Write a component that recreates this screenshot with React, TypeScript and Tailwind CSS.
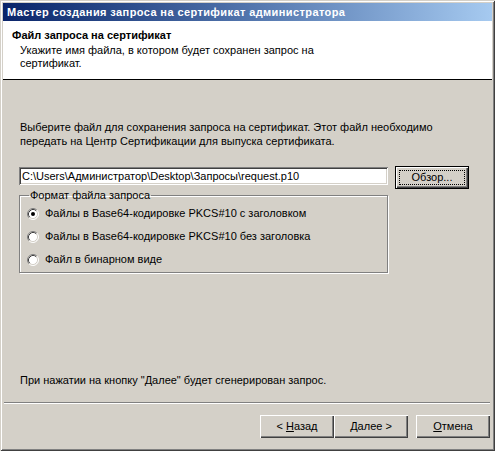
import React from "react";

const font = { fontFamily: '"Liberation Sans", Arial, sans-serif' };

function Radio({ checked }: { checked?: boolean }) {
  return (
    <svg width="12" height="12" viewBox="0 0 12 12" className="shrink-0">
      <circle cx="6" cy="6" r="5" fill="#ffffff" />
      <path d="M2.11 9.89 A5.5 5.5 0 0 1 9.89 2.11" fill="none" stroke="#808080" strokeWidth="1" />
      <path d="M2.82 9.18 A4.5 4.5 0 0 1 9.18 2.82" fill="none" stroke="#404040" strokeWidth="1" />
      <path d="M9.89 2.11 A5.5 5.5 0 0 1 2.11 9.89" fill="none" stroke="#ffffff" strokeWidth="1" />
      <path d="M9.18 2.82 A4.5 4.5 0 0 1 2.82 9.18" fill="none" stroke="#d4d0c8" strokeWidth="1" />
      {checked && <circle cx="6" cy="6" r="2" fill="#000000" />}
    </svg>
  );
}

function Button({ children, isDefault }: { children: React.ReactNode; isDefault?: boolean }) {
  if (isDefault) {
    return (
      <div className="w-[74px] h-[23px] border border-black bg-[#d4d0c8] shadow-[inset_1px_1px_#ffffff,inset_-1px_-1px_#404040,inset_-2px_-2px_#808080] p-[3px]">
        <div className="h-full border border-dotted border-black flex items-center justify-center text-[11px] text-black">
          <span>{children}</span>
        </div>
      </div>
    );
  }
  return (
    <div className="w-[74px] h-[23px] bg-[#d4d0c8] shadow-[inset_1px_1px_#ffffff,inset_-1px_-1px_#404040,inset_-2px_-2px_#808080] flex items-center justify-center text-[11px] text-black">
      <span className="whitespace-pre">{children}</span>
    </div>
  );
}

export default function App() {
  return (
    <div
      className="w-[495px] h-[451px] bg-[#d4d0c8] p-[3px] flex flex-col shadow-[inset_1px_1px_#d4d0c8,inset_-1px_-1px_#404040,inset_2px_2px_#ffffff,inset_-2px_-2px_#808080]"
      style={font}
    >
      {/* title bar */}
      <div className="h-[18px] bg-gradient-to-r from-[#0a246a] to-[#a6caf0] flex items-center pl-[4px]">
        <span className="text-white font-bold text-[11px] leading-none tracking-[0.4px]">
          Мастер создания запроса на сертификат администратора
        </span>
      </div>

      {/* header */}
      <div className="h-[59px] bg-white border-b border-black">
        <div className="pl-[9px] pt-[7px] text-[11px] font-bold text-black leading-[14px]">
          Файл запроса на сертификат
        </div>
        <div className="pl-[17px] pt-[2px] text-[11px] text-black leading-[13px]">
          Укажите имя файла, в котором будет сохранен запрос на
          <br />
          сертификат.
        </div>
      </div>

      {/* body */}
      <div className="flex-1 flex flex-col px-[16px]">
        <p className="mt-[40px] text-[11px] leading-[14px] text-black pl-[1px]">
          Выберите файл для сохранения запроса на сертификат. Этот файл необходимо
          <br />
          передать на Центр Сертификации для выпуска сертификата.
        </p>

        <div className="mt-[18px] flex items-start gap-[7px]">
          <div className="mt-[1px] w-[369px] h-[18px] bg-white shadow-[inset_1px_1px_#808080,inset_-1px_-1px_#ffffff,inset_2px_2px_#404040,inset_-2px_-2px_#d4d0c8] flex items-center px-[3px] text-[11px] text-black">
            C:\Users\Администратор\Desktop\Запросы\request.p10
          </div>
          <Button isDefault>Обзор...</Button>
        </div>

        <fieldset className="w-[369px] h-[84px] border border-[#808080] shadow-[inset_1px_1px_#ffffff,1px_1px_#ffffff] pl-[7px]">
          <legend className="ml-[2px] px-[1px] text-[11px] leading-[13px] text-black">Формат файла запроса</legend>
          <div className="flex flex-col text-[11px] text-black">
            <label className="h-[23px] flex items-center gap-[6px]">
              <Radio checked />
              Файлы в Base64-кодировке PKCS#10 с заголовком
            </label>
            <label className="h-[23px] flex items-center gap-[6px]">
              <Radio />
              Файлы в Base64-кодировке PKCS#10 без заголовка
            </label>
            <label className="h-[23px] flex items-center gap-[6px]">
              <Radio />
              Файл в бинарном виде
            </label>
          </div>
        </fieldset>

        <div className="flex-1" />
        <p className="text-[11px] leading-[13px] text-black pl-[1px] mb-[15px]">
          При нажатии на кнопку "Далее" будет сгенерирован запрос.
        </p>
      </div>

      {/* separator */}
      <div className="ml-[1px] mr-[2px] h-[2px] border-t border-[#808080] border-b border-b-white" />

      {/* buttons */}
      <div className="flex justify-end pr-[2px] pt-[11px] pb-[10px]">
        <Button>
          {"< "}
          <span className="underline">Н</span>азад
        </Button>
        <Button>
          <span className="underline">Д</span>
          {"алее >"}
        </Button>
        <div className="w-[8px]" />
        <Button>
          <span className="underline">О</span>тмена
        </Button>
      </div>
    </div>
  );
}
